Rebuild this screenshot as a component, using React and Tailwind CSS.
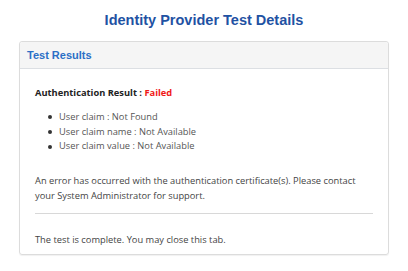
export default function App() {
  const body = { fontFamily: '"Open Sans", "Noto Sans", sans-serif' };
  const items = [
    "User claim : Not Found",
    "User claim name : Not Available",
    "User claim value : Not Available",
  ];
  return (
    <div className="w-[408px] h-[271px] bg-white overflow-hidden">
      <h1
        className="pt-[12px] text-center text-[14.5px] leading-[17px] font-bold text-[#1f52a3]"
        style={{ fontFamily: '"Liberation Sans", Arial, sans-serif' }}
      >
        Identity Provider Test Details
      </h1>
      <div className="px-[19px] mt-[12px]">
        <div className="border border-[#dcdcdc] rounded-[3px] shadow-[0_1px_1px_rgba(0,0,0,0.06)]">
          <div
            className="bg-[#f5f5f5] border-b border-[#dcdfe3] px-[7px] pt-[7px] pb-[6px] text-[11px] leading-[13px] font-bold text-[#2b6fc6] rounded-t-[3px]"
            style={{ fontFamily: '"Liberation Sans", Arial, sans-serif' }}
          >
            Test Results
          </div>
          <div className="px-[15px] pt-[16.5px] pb-[6px] text-[9.3px] leading-[14.8px]" style={body}>
            <div className="font-bold text-[#222]">
              Authentication Result : <span className="text-[#f01818]">Failed</span>
            </div>
            <div className="mt-[9.5px] flex flex-col">
              {items.map((t) => (
                <div key={t} className="flex items-center text-[#555]">
                  <span className="ml-[13px] w-[3.5px] h-[3.5px] rounded-full bg-[#333]" />
                  <span className="ml-[7.5px]">{t}</span>
                </div>
              ))}
            </div>
            <p className="mt-[20px] text-[#444]">
              An error has occurred with the authentication certificate(s). Please contact your System Administrator for
              support.
            </p>
            <div className="mt-[9px] border-t border-[#d8d8d8]" />
            <p className="mt-[19.5px] text-[#444]">The test is complete. You may close this tab.</p>
          </div>
        </div>
      </div>
    </div>
  );
}
